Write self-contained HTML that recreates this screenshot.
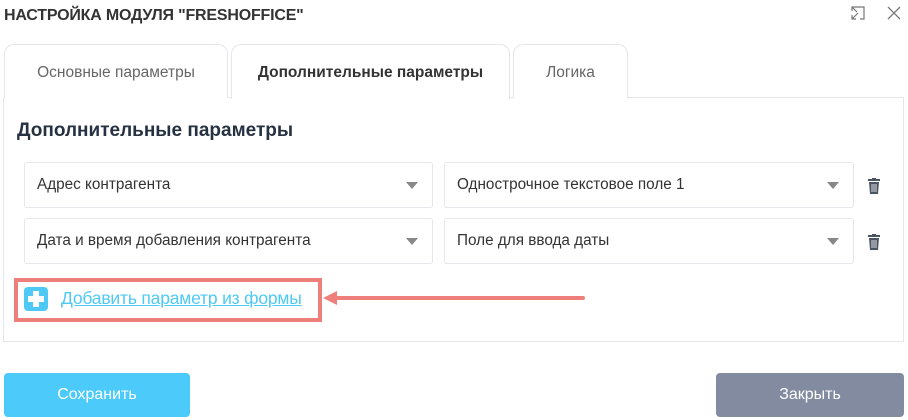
<!DOCTYPE html>
<html><head><meta charset="utf-8"><style>
*{box-sizing:border-box;margin:0;padding:0}
body{width:908px;height:420px;background:#fff;font-family:"Liberation Sans",sans-serif;position:relative;overflow:hidden;color:#333}
.abs{position:absolute}
.title{left:4px;top:7px;font-size:16px;font-weight:bold;color:#333;letter-spacing:-0.2px}
.tab{top:44px;height:54px;border:1px solid #e3e6ea;border-bottom:none;border-radius:10px 10px 0 0;font-size:15.5px;color:#666;text-align:center;line-height:56px;background:#fff}
.panel{left:3px;top:97px;width:901px;height:245px;border:1px solid #e3e6ea}
.h{left:17px;top:120px;font-size:19px;font-weight:bold;color:#263142}
.sel{height:46px;border:1px solid #e5e7ea;border-radius:3px;font-size:15.3px;color:#333;line-height:44px;padding-left:12px}
.sel:after{content:"";position:absolute;right:14px;top:19px;border-left:6px solid transparent;border-right:6px solid transparent;border-top:7px solid #888}
.btn{top:373px;height:44px;border-radius:4px;color:#fff;font-size:16px;text-align:center;line-height:44px}
</style></head><body>
<div class="abs title">НАСТРОЙКА МОДУЛЯ "FRESHOFFICE"</div>
<svg class="abs" style="left:851px;top:6px" width="14" height="14" viewBox="0 0 14 14" fill="none" stroke="#777" stroke-width="1.2"><path d="M1 5V1h12v12H9M1 9v4h4M1 13l6-6M1 1l5 5"/></svg>
<svg class="abs" style="left:887px;top:6px" width="14" height="14" viewBox="0 0 14 14" stroke="#777" stroke-width="1.3"><path d="M1 1l12 12M13 1L1 13"/></svg>
<div class="panel abs"></div>
<div class="tab abs" style="left:4px;width:224px">Основные параметры</div>
<div class="tab abs" style="left:231px;width:279px;height:55px;color:#333;font-weight:bold">Дополнительные параметры</div>
<div class="tab abs" style="left:513px;width:115px">Логика</div>
<div class="abs h">Дополнительные параметры</div>
<div class="abs sel" style="left:24px;top:162px;width:409px">Адрес контрагента</div>
<div class="abs sel" style="left:444px;top:162px;width:410px">Однострочное текстовое поле 1</div>
<div class="abs sel" style="left:24px;top:218px;width:409px">Дата и время добавления контрагента</div>
<div class="abs sel" style="left:444px;top:218px;width:410px">Поле для ввода даты</div>
<svg class="abs" style="left:867px;top:178px" width="14" height="16" viewBox="0 0 14 16"><rect x="1" y="1" width="12" height="2" fill="#4a5563"/><rect x="5" y="0" width="4" height="2" fill="#4a5563"/><path d="M2 4h10l-1 12H3z" fill="#4a5563"/><path d="M5 6v8M7 6v8M9 6v8" stroke="#fff" stroke-width="0.8"/></svg>
<svg class="abs" style="left:867px;top:234px" width="14" height="16" viewBox="0 0 14 16"><rect x="1" y="1" width="12" height="2" fill="#4a5563"/><rect x="5" y="0" width="4" height="2" fill="#4a5563"/><path d="M2 4h10l-1 12H3z" fill="#4a5563"/><path d="M5 6v8M7 6v8M9 6v8" stroke="#fff" stroke-width="0.8"/></svg>
<div class="abs" style="left:14px;top:278px;width:308px;height:44px;border:4px solid #ef7f7a"></div>
<div class="abs" style="left:24px;top:287px;width:24px;height:24px;background:#4ec9f5;border-radius:4px"></div>
<div class="abs" style="left:33px;top:291px;width:6px;height:16px;background:#fff"></div>
<div class="abs" style="left:28px;top:296px;width:16px;height:6px;background:#fff"></div>
<div class="abs" style="left:61px;top:288px;font-size:17.5px;color:#4ec9f5;text-decoration:underline;letter-spacing:-0.2px">Добавить параметр из формы</div>
<div class="abs" style="left:335px;top:296px;width:250px;height:4px;background:#ef7f7a;border-radius:2px"></div>
<div class="abs" style="left:323px;top:291px;border-top:7px solid transparent;border-bottom:7px solid transparent;border-right:14px solid #ef7f7a"></div>
<div class="abs btn" style="left:4px;width:186px;background:#4ccbfb">Сохранить</div>
<div class="abs btn" style="left:716px;width:188px;background:#838ba1">Закрыть</div>
</body></html>
